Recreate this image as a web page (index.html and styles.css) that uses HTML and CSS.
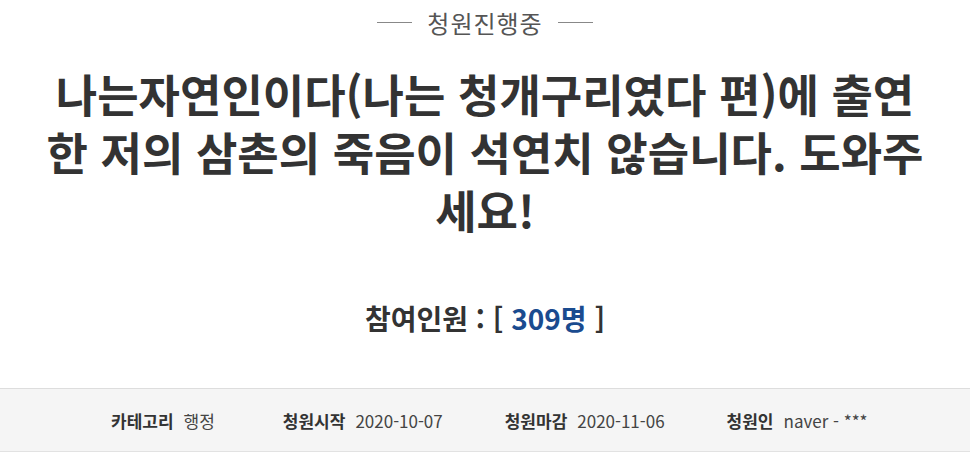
FILE: index.html
```html
<!DOCTYPE html>
<html lang="ko">
<head>
<meta charset="utf-8">
<link rel="stylesheet" href="styles.css">
</head>
<body>
<div class="petition">
  <div class="status"><span class="line"></span><span class="status-text">청원진행중</span><span class="line"></span></div>
  <h1 class="title">나는자연인이다(나는 청개구리였다 편)에 출연<br>한 저의 삼촌의 죽음이 석연치 않습니다. 도와주<br>세요!</h1>
  <h2 class="count">참여인원 : [ <span class="num">309명</span> ]</h2>
  <ul class="info">
    <li class="first"><strong>카테고리</strong><span>행정</span></li>
    <li><strong>청원시작</strong><span>2020-10-07</span></li>
    <li><strong>청원마감</strong><span>2020-11-06</span></li>
    <li><strong>청원인</strong><span>naver - ***</span></li>
  </ul>
</div>
</body>
</html>
```
FILE: styles.css
```css
html, body {
  margin: 0;
  padding: 0;
  background: #fff;
}
body {
  width: 970px;
  height: 453px;
  overflow: hidden;
  font-family: "Noto Sans CJK KR", "Noto Sans", sans-serif;
  color: #333;
}
.petition {
  display: flex;
  flex-direction: column;
  align-items: stretch;
}
.status {
  display: flex;
  justify-content: center;
  align-items: center;
  gap: 15px;
  height: 45px;
}
.status .line {
  width: 35px;
  height: 1px;
  background: #888;
}
.status-text {
  font-size: 24px;
  letter-spacing: 1px;
  color: #555;
  line-height: 1;
}
.title {
  margin: 0;
  padding: 0 40px;
  text-align: center;
  font-size: 45px;
  font-weight: 700;
  line-height: 58px;
  color: #333;
  margin-top: 20px;
}
.count {
  margin: 0;
  margin-top: 59px;
  text-align: center;
  font-size: 28px;
  font-weight: 700;
  line-height: 40px;
  color: #333;
}
.count .num {
  color: #1a4b8f;
}
.info {
  list-style: none;
  margin: 50px 0 0;
  padding: 0 0 0 111px;
  height: 62px;
  border-top: 1px solid #ddd;
  border-bottom: 1px solid #e2e2e2;
  background: #f5f5f5;
  display: flex;
  align-items: center;
  gap: 62px;
  font-size: 17px;
}
.info li {
  display: flex;
  gap: 10px;
  align-items: baseline;
}
.info li.first {
  margin-right: 6px;
}
.info strong {
  font-weight: 700;
  color: #333;
}
.info span {
  color: #444;
}
```
